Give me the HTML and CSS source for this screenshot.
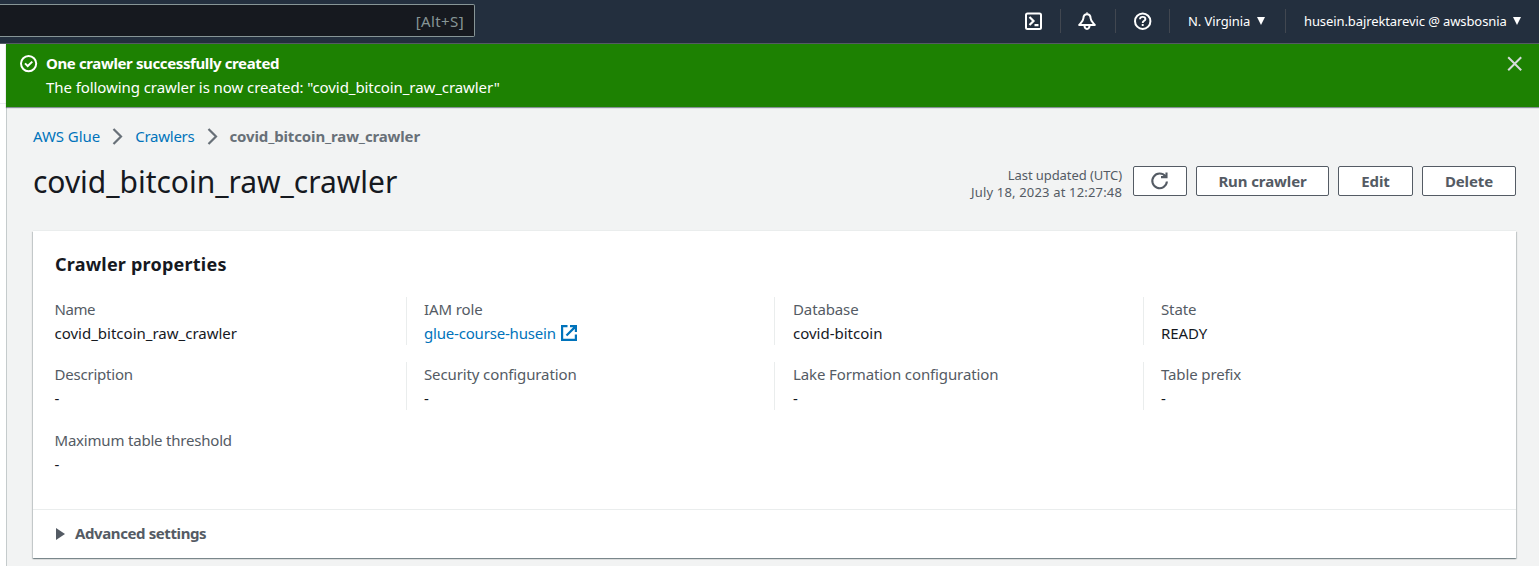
FILE: index.html
```html
<!DOCTYPE html>
<html lang="en">
<head>
<meta charset="utf-8">
<title>covid_bitcoin_raw_crawler - AWS Glue</title>
<link rel="stylesheet" href="styles.css">
</head>
<body>
<header class="topnav">
  <div class="search"><span>[Alt+S]</span></div>
  <nav class="tools">
    <div class="tool tool-shell"><svg width="20" height="20" viewBox="0 0 20 20" fill="none" stroke="#fff" stroke-width="2"><rect x="2" y="2.500" width="15" height="15.500" rx="1.500"/><path d="M5.500 6l4 4-4 4M10.500 14.200h4" stroke-width="2.200"/></svg></div>
    <div class="tool tool-bell"><svg width="20" height="20" viewBox="0 0 20 20" fill="none" stroke="#fff" stroke-width="2" stroke-linejoin="round"><path d="M10 3.200C8 3.200 6.500 4.700 6.400 7.200 6.300 10 4.300 11.500 2.200 13.900h15.600C15.700 11.500 13.700 10 13.600 7.200 13.500 4.700 12 3.200 10 3.200z"/><path d="M7.400 14.500c.2 2 1.200 3.400 2.600 3.400s2.400-1.400 2.600-3.400M10 1.500v1"/></svg></div>
    <div class="tool tool-help"><svg width="20" height="20" viewBox="0 0 20 20" fill="none" stroke="#fff" stroke-width="2"><circle cx="9.700" cy="10.200" r="7.700"/><path d="M7 8.300c0-1.500 1.200-2.400 2.700-2.400s2.700.8 2.700 2.300c0 1.600-2.700 1.700-2.700 3.700M9.700 13v2" stroke-width="1.900"/></svg></div>
    <div class="tool tool-region"><span>N. Virginia</span><i class="caret"></i></div>
    <div class="tool tool-user"><span>husein.bajrektarevic @ awsbosnia</span><i class="caret"></i></div>
  </nav>
</header>
<div class="shell">
  <aside class="rail"><div class="rail-head"></div></aside>
  <div class="content">
    <section class="flash">
      <svg class="flash-icon" width="18" height="18" viewBox="0 0 18 18" fill="none" stroke="#fff" stroke-width="2"><circle cx="8.600" cy="8.600" r="7.600"/><path d="M5 8.400l2.700 2.600 4.600-4.400"/></svg>
      <div class="flash-text"><div class="flash-title">One crawler successfully created</div><div class="flash-msg">The following crawler is now created: "covid_bitcoin_raw_crawler"</div></div>
      <svg class="close" width="16" height="16" viewBox="0 0 16 16" fill="none" stroke="#d5dbdb" stroke-width="2"><path d="M1.200 1.200l13 13M14.200 1.200l-13 13"/></svg>
    </section>
    <main class="main">
      <nav class="crumbs">
        <a class="crumb-a">AWS Glue</a>
        <svg width="11" height="17" viewBox="0 0 11 17" fill="none" stroke="#687078" stroke-width="2.200"><path d="M1.500 1l7.500 7.500L1.500 16"/></svg>
        <a class="crumb-b">Crawlers</a>
        <svg width="11" height="17" viewBox="0 0 11 17" fill="none" stroke="#687078" stroke-width="2.200"><path d="M1.500 1l7.500 7.500L1.500 16"/></svg>
        <b class="crumb-c">covid_bitcoin_raw_crawler</b>
      </nav>
      <div class="title-row">
        <h1>covid_bitcoin_raw_crawler</h1>
        <div class="updated"><div class="upd-a">Last updated (UTC)</div><div class="upd-b">July 18, 2023 at 12:27:48</div></div>
        <button class="btn btn-refresh"><svg width="20" height="20" viewBox="0 0 20 20" fill="none" stroke="#545b64" stroke-width="2.100"><path d="M16.900 10.500A7.300 7.300 0 1 1 15.400 5.400M11 6.100h5.500V1.500"/></svg></button>
        <button class="btn btn-run"><span>Run crawler</span></button>
        <button class="btn btn-edit"><span>Edit</span></button>
        <button class="btn btn-delete"><span>Delete</span></button>
      </div>
      <section class="panel">
        <h2>Crawler properties</h2>
        <div class="grid">
          <div class="cell"><label class="l-name">Name</label><p>covid_bitcoin_raw_crawler</p></div>
          <div class="cell"><label>IAM role</label><p class="link"><span>glue-course-husein</span><svg width="16" height="16" viewBox="0 0 16 16" fill="none" stroke="#0073bb" stroke-width="2.200"><path d="M6.500 1.100H1.100v13.800h13.800V9.500M9 1.100h5.900V7M14.900 1.100L5.500 10.500"/></svg></p></div>
          <div class="cell third"><label>Database</label><p>covid-bitcoin</p></div>
          <div class="cell"><label>State</label><p class="v-state">READY</p></div>
          <div class="cell"><label class="l-desc">Description</label><p>-</p></div>
          <div class="cell"><label>Security configuration</label><p>-</p></div>
          <div class="cell third"><label>Lake Formation configuration</label><p>-</p></div>
          <div class="cell"><label>Table prefix</label><p>-</p></div>
          <div class="cell"><label class="l-max">Maximum table threshold</label><p>-</p></div>
        </div>
        <div class="advanced"><i class="arrow"></i><span>Advanced settings</span></div>
      </section>
    </main>
  </div>
</div>
</body>
</html>
```
FILE: styles.css
```css
* { box-sizing: border-box; }
body { margin: 0; width: 1539px; height: 566px; overflow: hidden; background: #f2f3f3; color: #16191f; font: 15px/24px "Noto Sans", sans-serif; letter-spacing: -0.25px; }
h1, h2, p { margin: 0; font-size: inherit; }
.topnav { display: flex; justify-content: space-between; height: 44px; background: #232f3e; border-bottom: 1px solid #545b64; padding-top: 4px; }
.search { width: 475px; height: 33px; background: #16191f; border: 1px solid #879596; border-left: 0; border-radius: 0 2px 2px 0; color: #879596; display: flex; justify-content: flex-end; padding-right: 10px; line-height: 33px; letter-spacing: 0.4px; }
.tools { display: flex; padding-top: 5px; }
.tool { height: 24px; display: flex; align-items: center; color: #fff; font-size: 13px; letter-spacing: 0; padding-left: 18px; border-left: 1px solid #414750; }
.tool-shell { border: 0; padding: 0; width: 36px; }
.tool-bell { width: 55px; }
.tool-help { width: 54px; }
.tool-region { width: 116px; letter-spacing: -0.08px; }
.tool-user { width: 254px; letter-spacing: -0.1px; }
.tool svg { flex: none; }
.tool-bell svg, .tool-help svg { margin-left: -2px; }
.tool-help svg { margin-left: -1px; }
.caret { border: 4.5px solid transparent; border-top: 8px solid #fff; border-bottom: 0; margin: -1px 0 0 7px; }
.tool-user .caret { margin-left: 6px; }
.shell { display: flex; height: 522px; }
.rail { width: 6px; background: #fff; }
.rail-head { height: 60px; border-bottom: 1px solid #eaeded; }
.content { width: 1533px; border-left: 1px solid #c5cbcc; }
.flash { display: flex; height: 63px; margin-left: -1px; padding: 7px 16px 0 14px; background: #1d8102; color: #fff; box-shadow: 0 1px 1px rgba(0,28,36,.45); }
.flash-icon { margin: 4px 8px 0 0; }
.flash-text { flex: 1; }
.flash-title { font-weight: 700; letter-spacing: -0.38px; }
.flash-msg { letter-spacing: -0.075px; }
.close { margin-top: 5px; }
.main { padding: 17px 23px 0 26px; }
.crumbs { display: flex; align-items: center; height: 24px; gap: 12px; color: #687078; }
.crumbs a { color: #0073bb; }
.crumbs .crumb-a { letter-spacing: -0.05px; }
.crumb-c { letter-spacing: -0.14px; }
.title-row { display: flex; align-items: flex-start; height: 82px; padding-top: 18px; }
h1 { flex: 1; font-size: 30px; font-weight: 400; line-height: 33px; letter-spacing: -0.03px; margin-top: -1px; }
.updated { width: 160px; text-align: right; color: #545b64; font-size: 13px; line-height: 17px; margin: 1px 11px 0 0; white-space: nowrap; }
.upd-a { letter-spacing: -0.08px; }
.upd-b { letter-spacing: 0.17px; }
.btn { height: 30px; border: 1px solid #545b64; border-radius: 2px; background: #fff; color: #545b64; font: 700 15px/28px "Noto Sans", sans-serif; padding: 0; margin-left: 9px; display: flex; align-items: center; justify-content: center; letter-spacing: -0.1px; }
.btn-refresh { width: 54px; margin-left: 0; }
.btn-run { width: 133px; }
.btn-edit { width: 75px; }
.btn-delete { width: 94px; }
.panel { height: 327px; background: #fff; margin-top: 1px; box-shadow: 0 1px 1px rgba(0,28,36,.3), 1px 1px 1px rgba(0,28,36,.15), -1px 1px 1px rgba(0,28,36,.15), 0 -1px 0 #eaeded; }
h2 { padding: 21px 22px 0; height: 66px; font-size: 18px; line-height: 24px; letter-spacing: 0.22px; }
.grid { display: grid; grid-template-columns: 373px 368px 369px 350px; grid-template-rows: 65px 66px 48px; height: 212px; }
.cell { height: 48px; padding-left: 17px; border-left: 1px solid #eaeded; }
.cell:nth-child(4n+1) { border: 0; padding-left: 21.500px; }
.cell.third { padding-left: 18px; }
.cell:nth-child(n+5):nth-child(-n+8) { padding-top: 0; }
.cell p { letter-spacing: 0; }
.cell .v-state { letter-spacing: -0.1px; }
label { display: block; color: #545b64; letter-spacing: -0.12px; }
.l-name { letter-spacing: -0.45px; }
.l-desc { letter-spacing: -0.22px; }
.l-max { letter-spacing: -0.2px; }
.cell .link { display: flex; align-items: center; color: #0073bb; gap: 5px; letter-spacing: -0.19px; }
.advanced { height: 49px; border-top: 1px solid #eaeded; display: flex; align-items: center; color: #545b64; font-weight: 700; padding-left: 23px; gap: 10px; letter-spacing: -0.4px; }
.advanced span { margin-top: -2px; }
.arrow { border: 6px solid transparent; border-left: 9px solid #545b64; border-right: 0; }
```
